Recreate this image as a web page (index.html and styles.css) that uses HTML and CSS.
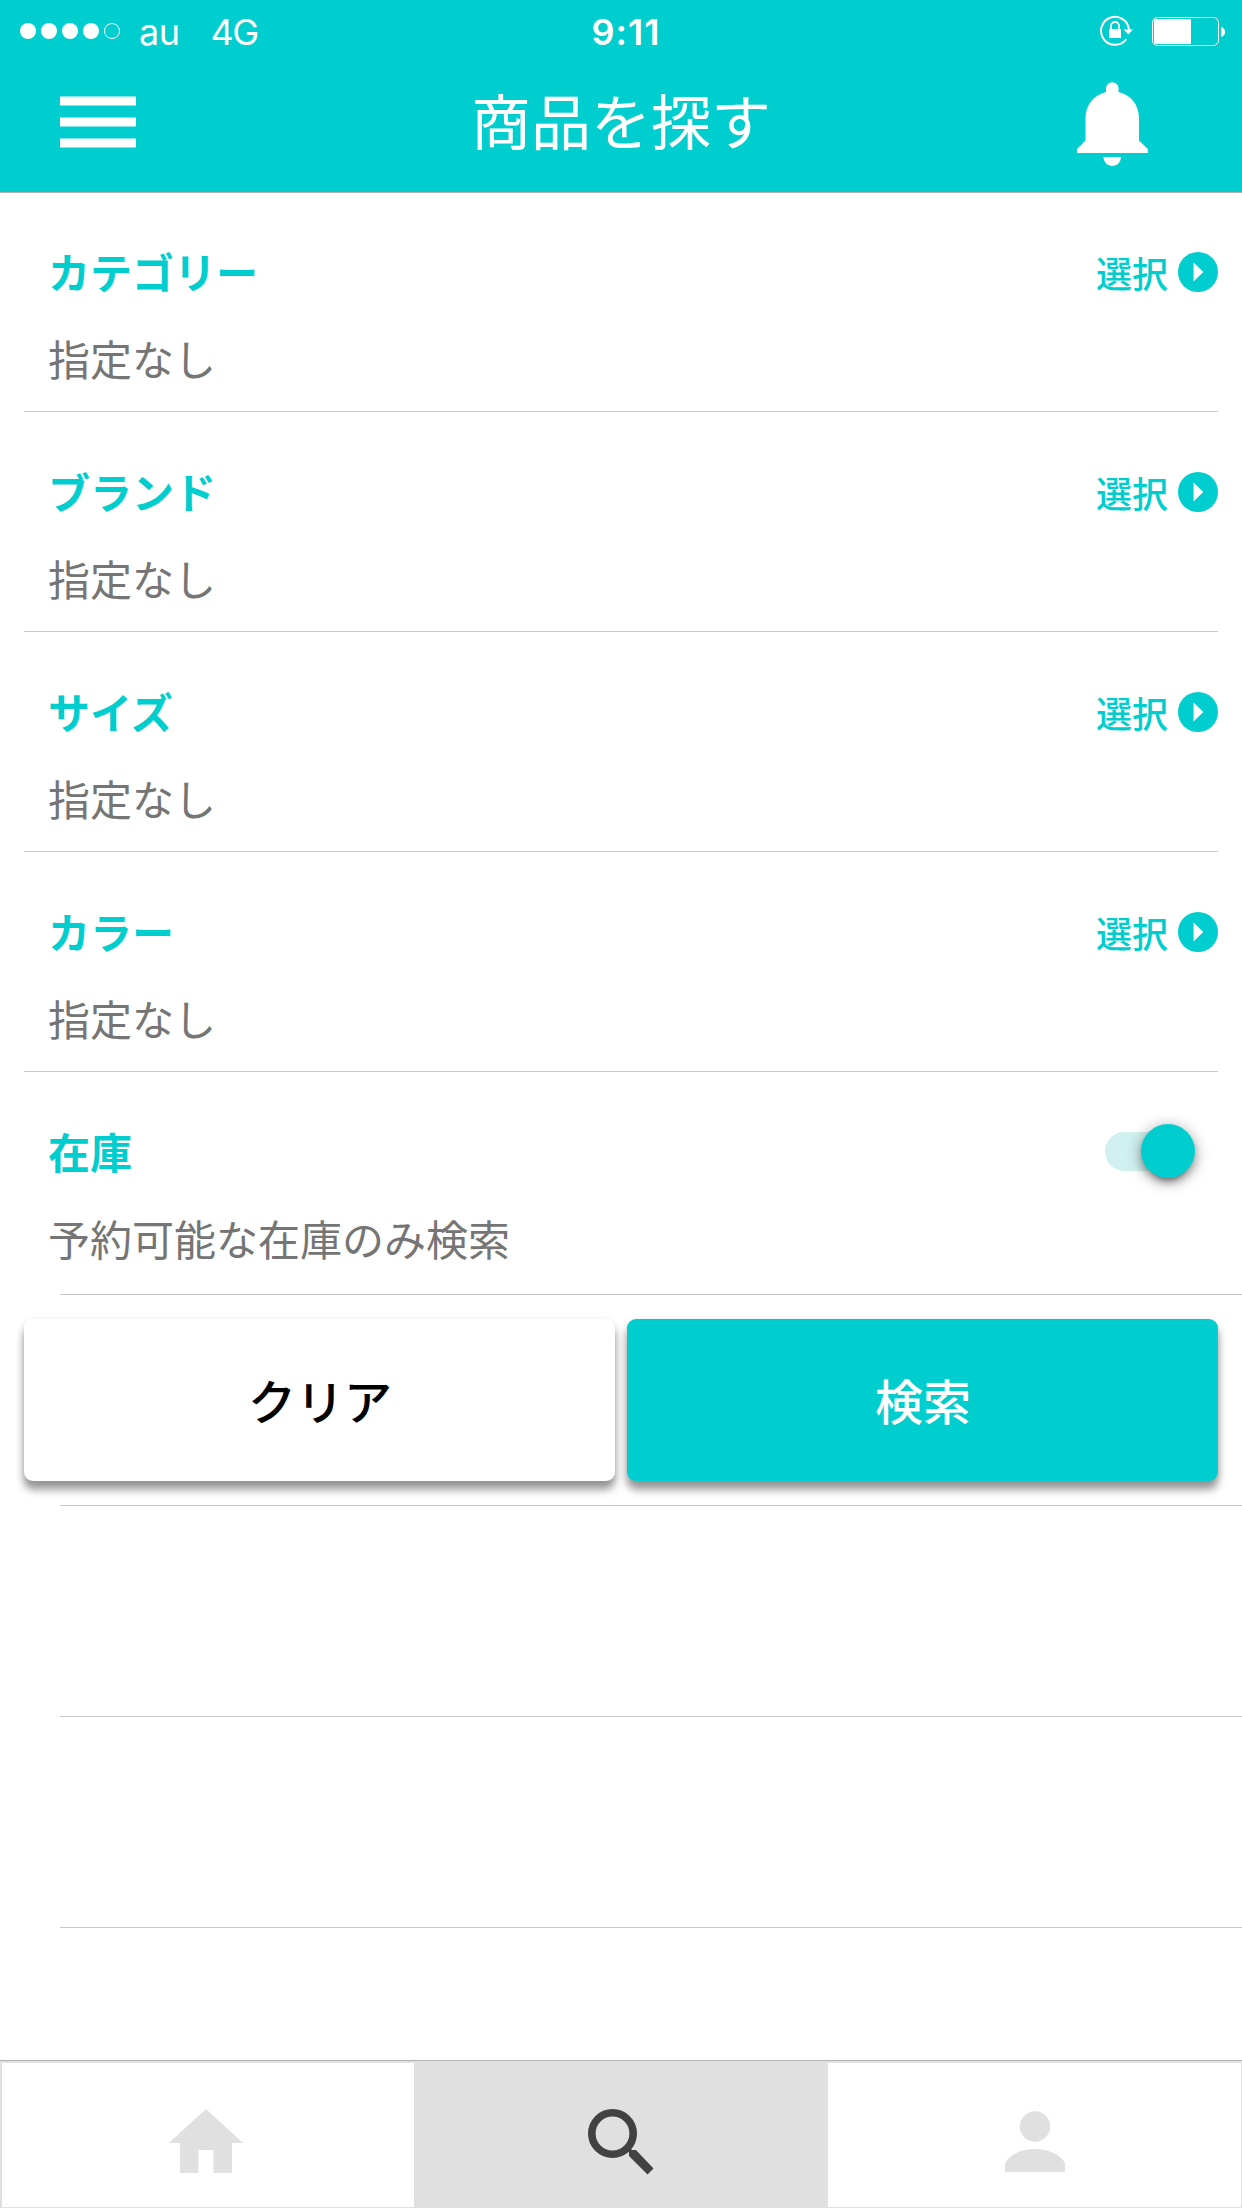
FILE: index.html
```
<!DOCTYPE html>
<html lang="ja">
<head>
  <meta charset="UTF-8" />
  <meta name="viewport" content="width=device-width, initial-scale=1.0"/>
  <title>商品を探す</title>
  <link rel="stylesheet" href="styles.css">
</head>
<body>

  <header class="header">
    <div class="status-bar">
      <div class="status-left">
        <div class="signal">
          <i class="dot"></i><i class="dot"></i><i class="dot"></i><i class="dot"></i><i class="dot empty"></i>
        </div>
        <span class="carrier">au</span>
        <span class="network">4G</span>
      </div>
      <span class="time">9:11</span>
      <div class="status-right">
        <svg class="lock-icon" width="36" height="32" viewBox="0 0 36 32">
          <path d="M27.4 24 A14 14 0 1 1 30 15" fill="none" stroke="#fff" stroke-width="2"/>
          <path d="M24.5 14.5 H34 L29.3 19.5 Z" fill="#fff"/>
          <rect x="10" y="14" width="12" height="9" fill="#fff"/>
          <path d="M12 15 V11 a4 4 0 0 1 8 0 V15" fill="none" stroke="#fff" stroke-width="1.8"/>
        </svg>
        <svg class="battery-icon" width="74" height="30" viewBox="0 0 74 30">
          <rect x="0.5" y="0.5" width="66" height="28" rx="5" fill="none" stroke="#fff"/>
          <path d="M4 2 H39 V27 H4 Q2 27 2 25 V4 Q2 2 4 2 Z" fill="#fff"/>
          <path d="M69 10 Q73 11 73 15 Q73 19 69 20 Z" fill="#fff"/>
        </svg>
      </div>
    </div>
    <div class="nav-bar">
      <svg class="menu-icon" width="76" height="52" viewBox="0 0 76 52">
        <path d="M0 .4 H76 V9.6 H0 Z M0 21.4 H76 V30.6 H0 Z M0 42.4 H76 V51.6 H0 Z" fill="#fff"/>
      </svg>
      <h1>商品を探す</h1>
      <svg class="bell-icon" width="71" height="84" viewBox="0 0 71 84">
        <path d="M29 10 V6.5 A6.3 6.3 0 0 1 41.6 6.5 V10 C54 13 62 23 62 36 V58.5 L70.8 67 V71 H0 V67 L8.5 58.5 V36 C8.5 23 17 13 29 10 Z" fill="#fff"/>
        <path d="M26.5 75 H44 C44 80 40 84 35.3 84 C30.5 84 26.5 80 26.5 75 Z" fill="#fff"/>
      </svg>
    </div>
  </header>

  <main>
    <section class="row">
      <div class="row-head">
        <h2>カテゴリー</h2>
        <a class="select">選択 <svg width="40" height="40" viewBox="0 0 40 40"><circle cx="20" cy="20" r="20"/><path d="M15.6 10.5 L25.3 20 L15.6 29.5 Z"/></svg></a>
      </div>
      <p>指定なし</p>
    </section>
    <section class="row">
      <div class="row-head">
        <h2>ブランド</h2>
        <a class="select">選択 <svg width="40" height="40" viewBox="0 0 40 40"><circle cx="20" cy="20" r="20"/><path d="M15.6 10.5 L25.3 20 L15.6 29.5 Z"/></svg></a>
      </div>
      <p>指定なし</p>
    </section>
    <section class="row">
      <div class="row-head">
        <h2>サイズ</h2>
        <a class="select">選択 <svg width="40" height="40" viewBox="0 0 40 40"><circle cx="20" cy="20" r="20"/><path d="M15.6 10.5 L25.3 20 L15.6 29.5 Z"/></svg></a>
      </div>
      <p>指定なし</p>
    </section>
    <section class="row">
      <div class="row-head">
        <h2>カラー</h2>
        <a class="select">選択 <svg width="40" height="40" viewBox="0 0 40 40"><circle cx="20" cy="20" r="20"/><path d="M15.6 10.5 L25.3 20 L15.6 29.5 Z"/></svg></a>
      </div>
      <p>指定なし</p>
    </section>
    <section class="row stock">
      <div class="row-head">
        <h2>在庫</h2>
        <div class="toggle"><span class="knob"></span></div>
      </div>
      <p>予約可能な在庫のみ検索</p>
    </section>

    <hr>
    <div class="buttons">
      <button type="button" class="clear">クリア</button>
      <button type="button" class="search">検索</button>
    </div>
    <hr>
    <div class="blank"></div>
    <hr>
    <div class="blank"></div>
    <hr>
  </main>

  <nav class="tabs">
    <a class="tab home">
      <svg width="76" height="66" viewBox="0 0 76 66"><path d="M38 0 L75 34 H64 V64 H45.5 V41 H30.5 V64 H12 V34 H1 Z" fill="#e0e0e0"/></svg>
    </a>
    <a class="tab active">
      <svg width="66" height="66" viewBox="0 0 66 66">
        <circle cx="24.5" cy="24.5" r="20.7" fill="none" stroke="#424242" stroke-width="7.6"/>
        <path d="M38.5 42 L42 38.5 L44 41 H48 L65.5 59.5 L59.5 65.5 L41 47 V43.5 Z" fill="#424242"/>
      </svg>
    </a>
    <a class="tab">
      <svg width="60" height="66" viewBox="0 0 60 66">
        <circle cx="30" cy="17.5" r="15.2" fill="#e0e0e0"/>
        <path d="M0 63 V54 C5 45 17 40 30 40 C43 40 55 45 60 54 V63 Z" fill="#e0e0e0"/>
      </svg>
    </a>
  </nav>

</body>
</html>
```
FILE: styles.css
```
* {
  box-sizing: border-box;
}

body {
  margin: 0;
  height: 2208px;
  display: flex;
  flex-direction: column;
  background-color: #fff;
  color: #000;
  font-family: "Noto Sans CJK JP", sans-serif;
  overflow: hidden;
}

h1, h2, p {
  margin: 0;
  font-weight: 400;
}

svg {
  display: block;
  flex: none;
}

/* header */
.header {
  height: 193px;
  background-color: #00cdcd;
  border-bottom: 1px solid #b2b2b2;
  color: #fff;
}

.status-bar {
  height: 60px;
  padding: 0 16px 0 20px;
  display: grid;
  grid-template-columns: 1fr auto 1fr;
  align-items: center;
  font-family: Inter, sans-serif;
  font-size: 36px;
  line-height: 60px;
}

.status-left,
.status-right,
.signal {
  display: flex;
  align-items: center;
}

.signal {
  gap: 5px;
}

.dot {
  width: 16px;
  height: 16px;
  border-radius: 50%;
  background-color: #fff;
}

.dot.empty {
  background: none;
  border: 1px solid #fff;
}

.carrier {
  margin-left: 19px;
  padding-top: 2px;
  font-weight: 400;
  letter-spacing: -0.5px;
}

.network {
  margin-left: 31px;
  padding-top: 2px;
  font-weight: 400;
  letter-spacing: -1.5px;
}

.time {
  padding-top: 2px;
  padding-left: 6px;
  font-weight: 600;
  font-size: 36px;
  letter-spacing: 1px;
}

.status-right {
  justify-content: flex-end;
}

.battery-icon {
  margin-left: 17px;
  margin-top: 2px;
}

.nav-bar {
  height: 132px;
  padding: 0 94px 0 60px;
  display: grid;
  grid-template-columns: 1fr auto 1fr;
  align-items: center;
}

.nav-bar h1 {
  padding-left: 34px;
  font-size: 60px;
  line-height: 118px;
  height: 132px;
}

.menu-icon {
  margin-bottom: 8px;
}

.bell-icon {
  justify-self: end;
  margin-bottom: 4px;
}

/* search conditions */
main {
  flex: 1;
  margin-top: -1px;
}

.row {
  height: 220px;
  margin: 0 24px;
  padding: 49px 0 0 24px;
  border-bottom: 1px solid #c8c7cc;
}

.row.stock {
  height: 222px;
  border-bottom: none;
}

.row-head {
  height: 60px;
  display: flex;
  justify-content: space-between;
  align-items: center;
}

.row h2 {
  color: #00cdcd;
  font-size: 42px;
  font-weight: 700;
  line-height: 60px;
}

.row p {
  margin-top: 27px;
  color: #757575;
  font-size: 42px;
  line-height: 60px;
}

.select {
  padding-top: 2px;
  display: flex;
  align-items: center;
  gap: 10px;
  color: #00cdcd;
  font-size: 36px;
  font-weight: 500;
  line-height: 60px;
}

.select circle {
  fill: #00cdcd;
}

.select path {
  fill: #fff;
}

.toggle {
  width: 84px;
  height: 39px;
  margin-right: 29px;
  border-radius: 20px;
  background-color: #d0f1f0;
  display: flex;
  align-items: center;
}

.knob {
  flex: none;
  width: 54px;
  height: 54px;
  margin-left: 36px;
  border-radius: 50%;
  background-color: #00cdcd;
  box-shadow: 0 6px 6px 0 rgba(0, 0, 0, 0.16), 0 9px 3px -6px rgba(0, 0, 0, 0.18), 0 3px 15px 0 rgba(0, 0, 0, 0.4);
}

hr {
  height: 1px;
  margin: 0 0 0 60px;
  border: none;
  background-color: #c8c7cc;
}

.buttons {
  height: 210px;
  padding: 24px;
  display: grid;
  grid-template-columns: 1fr 1fr;
  gap: 12px;
}

.buttons button {
  padding: 0 0 2px 1px;
  border: none;
  border-radius: 9px;
  font-family: inherit;
  font-size: 48px;
  font-weight: 500;
  box-shadow: 0 9px 9px 0 rgba(0, 0, 0, 0.36), 0 3px 9px 0 rgba(0, 0, 0, 0.14);
}

.clear {
  background-color: #fff;
  color: #000;
}

.buttons .search {
  background-color: #00cdcd;
  color: #fff;
}

.blank {
  height: 210px;
}

/* bottom tabs */
.tabs {
  height: 148px;
  padding: 2px 1px 1px 2px;
  display: grid;
  grid-template-columns: 412px 414px 1fr;
  background-color: #e0e0e0;
  border-top: 1px solid #b2b2b2;
}

.tab {
  display: flex;
  justify-content: center;
  align-items: center;
  padding-top: 13px;
  background-color: #fff;
}

.tab.home {
  padding-right: 4px;
}

.tab.active {
  background-color: #e0e0e0;
}
```
